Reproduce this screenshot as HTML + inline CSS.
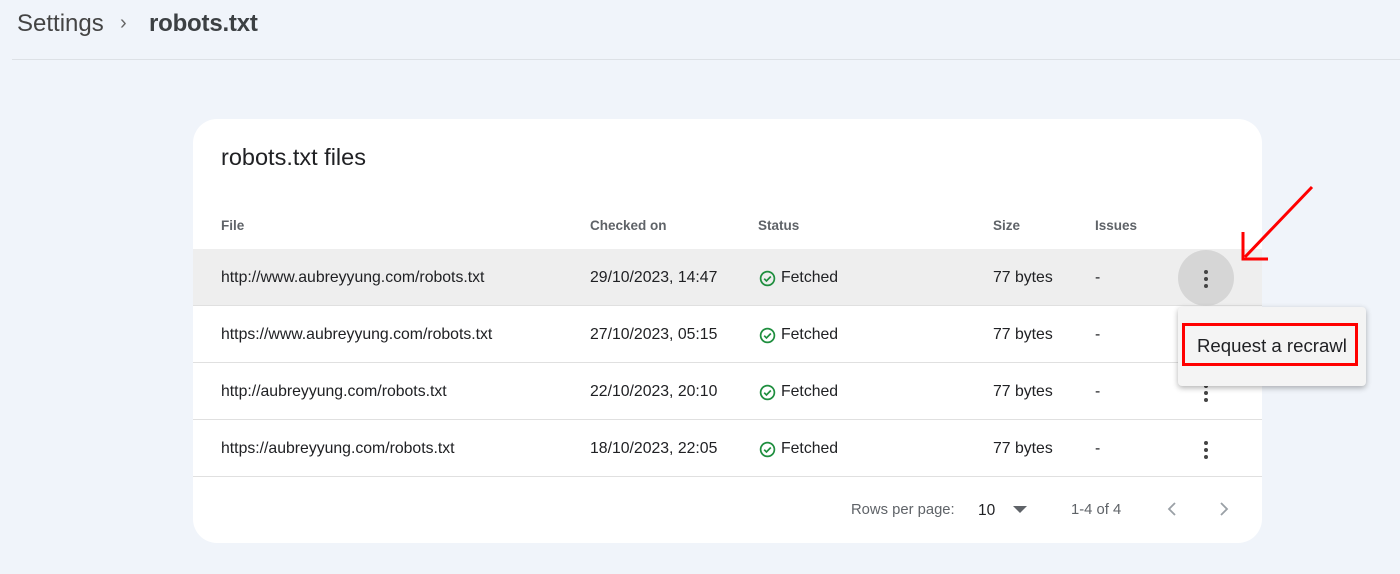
<!DOCTYPE html>
<html><head><meta charset="utf-8"><style>
*{margin:0;padding:0;box-sizing:border-box}
body{width:1400px;height:574px;background:#f0f4fa;font-family:"Liberation Sans",Arial,sans-serif;position:relative;overflow:hidden;color:#202124}
.bc{position:absolute;top:10px;left:17px;font-size:24px;color:#444}
.bc b{font-weight:bold;color:#3c4043;letter-spacing:-0.2px}
.hl{position:absolute;top:59px;left:12px;right:0;height:1px;background:#dde1e6}
.card{position:absolute;left:193px;top:119px;width:1069px;height:424px;background:#fff;border-radius:24px;overflow:hidden}
.title{position:absolute;left:28px;top:25px;font-size:23.5px;color:#202124}
.t{position:absolute;font-size:15.8px;color:#202124}
.h{position:absolute;font-size:13.5px;color:#5f6368;top:99px;font-weight:bold}
.row{position:absolute;left:0;width:1069px;height:57px;border-bottom:1px solid #e0e0e0}
.dots{position:absolute;width:4px}
.dots i{display:block;width:4px;height:4px;border-radius:2px;background:#444;margin-bottom:3px}
</style></head><body>
<div class="bc">Settings</div>
<div style="position:absolute;left:120px;top:12px;font-size:20px;color:#666">&#x203A;</div>
<div class="bc" style="left:149px"><b>robots.txt</b></div>
<div class="hl"></div>
<div class="card">
<div class="title">robots.txt files</div>
<div class="h" style="left:28px">File</div>
<div class="h" style="left:397px">Checked on</div>
<div class="h" style="left:565px">Status</div>
<div class="h" style="left:800px">Size</div>
<div class="h" style="left:902px">Issues</div>
<div class="row" style="top:130px;background:#eeeeee"></div>
<div class="row" style="top:187px"></div>
<div class="row" style="top:244px"></div>
<div class="row" style="top:301px"></div>
<div style="position:absolute;left:985px;top:131px;width:56px;height:56px;border-radius:50%;background:#d6d6d6"></div>
</div>
<div id="rows"></div>
<script>
var d=[["http://www.aubreyyung.com/robots.txt","29/10/2023, 14:47"],["https://www.aubreyyung.com/robots.txt","27/10/2023, 05:15"],["http://aubreyyung.com/robots.txt","22/10/2023, 20:10"],["https://aubreyyung.com/robots.txt","18/10/2023, 22:05"]];
var h="";d.forEach(function(r,i){var y=269+i*57;
h+='<div class="t" style="left:221px;top:'+y+'px">'+r[0]+'</div><div class="t" style="left:590px;top:'+y+'px">'+r[1]+'</div>'+
'<svg style="position:absolute;left:759px;top:'+(y+1)+'px" width="17" height="17" viewBox="0 0 18 18"><circle cx="9" cy="9" r="7.3" fill="none" stroke="#1e8e3e" stroke-width="1.8"/><path d="M5.5 9.2l2.4 2.4 4.6-4.7" fill="none" stroke="#1e8e3e" stroke-width="1.8"/></svg>'+
'<div class="t" style="left:781px;top:'+y+'px">Fetched</div><div class="t" style="left:993px;top:'+y+'px">77 bytes</div><div class="t" style="left:1095px;top:'+y+'px">-</div>'+
'<div class="dots" style="left:1204px;top:'+(y+1)+'px;position:absolute"><i></i><i></i><i></i></div>';});
document.getElementById("rows").innerHTML=h;
</script>
<div class="t" style="left:851px;top:502px;font-size:14.8px;color:#5f6368">Rows per page:</div>
<div class="t" style="left:978px;top:502px;font-size:15.5px">10</div>
<svg style="position:absolute;left:1013px;top:506px" width="14" height="8"><path d="M0 0h14L7 7z" fill="#5f6368"/></svg>
<div class="t" style="left:1071px;top:502px;font-size:14.8px;color:#5f6368">1-4 of 4</div>
<svg style="position:absolute;left:1166px;top:501px" width="12" height="16"><path d="M9 2L3 8l6 6" fill="none" stroke="#9aa0a6" stroke-width="1.8"/></svg>
<svg style="position:absolute;left:1218px;top:501px" width="12" height="16"><path d="M3 2l6 6-6 6" fill="none" stroke="#9aa0a6" stroke-width="1.8"/></svg>
<div style="position:absolute;left:1178px;top:307px;width:188px;height:79px;background:#f4f4f4;border-radius:4px;box-shadow:0 2px 6px rgba(0,0,0,.3)"></div>
<div style="position:absolute;left:1182px;top:323px;width:176px;height:43px;border:3px solid #f00"></div>
<div class="t" style="left:1197px;top:335px;font-size:18.6px">Request a recrawl</div>
<svg style="position:absolute;left:0;top:0" width="1400" height="574"><path d="M1312 187L1245 257M1243 232L1243 259L1268 259" fill="none" stroke="#f00" stroke-width="3"/></svg>
</body></html>
